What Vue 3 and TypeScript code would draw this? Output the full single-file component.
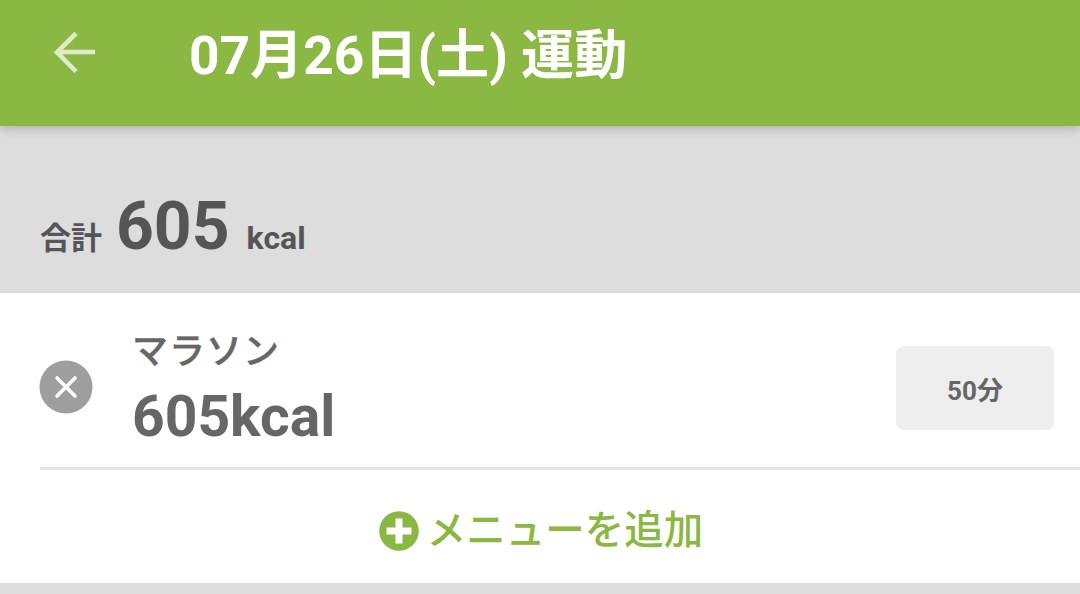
<script setup lang="ts">
const title = '07月26日(土) 運動'
const total = 605
const items = [{ name: 'マラソン', kcal: '605kcal', time: '50分' }]
</script>

<template>
  <div class="page">
    <header class="bar">
      <svg class="back" viewBox="0 0 44 48" width="44" height="48" aria-hidden="true">
        <path d="M43 24H7M24 5.500L5 24.200L24 43.500" fill="none" stroke="#dfeccb" stroke-width="4.600" />
      </svg>
      <h1 class="title">{{ title }}</h1>
    </header>
    <section class="summary">
      <span class="sum-label">合計</span>
      <span class="sum-value">{{ total }}</span>
      <span class="sum-unit">kcal</span>
    </section>
    <section class="list">
      <div v-for="item in items" :key="item.name" class="row">
        <svg class="remove" viewBox="0 0 54 54" width="54" height="54" aria-hidden="true">
          <circle cx="27" cy="27" r="26.500" fill="#9e9e9e" />
          <path d="M18 18L36 36M36 18L18 36" stroke="#fff" stroke-width="3.600" stroke-linecap="round" />
        </svg>
        <div class="info">
          <div class="name">{{ item.name }}</div>
          <div class="kcal">{{ item.kcal }}</div>
        </div>
        <div class="time">{{ item.time }}</div>
      </div>
      <div class="add">
        <svg class="plus" viewBox="0 0 40 40" width="40" height="40" aria-hidden="true">
          <circle cx="20" cy="20" r="19.800" fill="#8ab842" />
          <path d="M20 7.500V32.500M7.500 20H32.500" stroke="#fff" stroke-width="7" />
        </svg>
        <span class="add-label">メニューを追加</span>
      </div>
    </section>
    <div class="foot"></div>
  </div>
</template>

<style scoped>
.page {
  width: 1080px;
  height: 594px;
  overflow: hidden;
  display: flex;
  flex-direction: column;
  background: #dddddd;
  font-family: Roboto, "Noto Sans CJK JP", sans-serif;
}
.bar {
  height: 126px;
  flex: none;
  display: flex;
  align-items: center;
  background: #8ab842;
  box-shadow: 0 3px 10px rgba(0, 0, 0, 0.2);
  position: relative;
  padding: 0 0 12px 52px;
  box-sizing: border-box;
}
.back { flex: none; margin-top: -10px; }
.title {
  margin: 0 0 0 93px;
  font-size: 53.200px;
  font-weight: 700;
  color: #fff;
  line-height: 1;
  white-space: nowrap;
}
.summary {
  height: 167px;
  flex: none;
  box-sizing: border-box;
  display: flex;
  align-items: baseline;
  padding: 68px 0 0 40px;
  color: #555;
  font-weight: 700;
}
.sum-label { font-size: 31px; }
.sum-value { font-size: 66px; margin-left: 14px; line-height: 1; }
.sum-unit { font-size: 32px; margin-left: 17px; }
.list { background: #fff; flex: none; }
.row {
  height: 177px;
  box-sizing: border-box;
  margin-left: 40px;
  padding-right: 26px;
  border-bottom: 3px solid #e4e4e4;
  display: flex;
  align-items: center;
}
.remove { flex: none; margin: 14px 0 0 -1px; }
.info { margin-left: 39px; flex: 1; color: #666; align-self: flex-start; padding-top: 32px; }
.name { font-size: 36px; font-weight: 500; line-height: 46px; letter-spacing: 1px; font-family: "Noto Sans CJK JP", sans-serif; -webkit-text-stroke: 0.4px #666; }
.kcal { font-size: 57px; font-weight: 700; line-height: 80px; margin-top: 6px; }
.time {
  width: 158px;
  height: 84px;
  margin-top: 16px;
  border-radius: 8px;
  background: #eeeeee;
  color: #666;
  font-size: 26px;
  font-weight: 700;
  display: flex;
  align-items: center;
  justify-content: center;
}
.add {
  height: 113px;
  display: flex;
  align-items: center;
  justify-content: center;
  gap: 8px;
  padding-left: 2px;
}
.plus { flex: none; margin-top: 8px; }
.add-label { font-size: 39.500px; font-weight: 500; color: #8ab842; font-family: "Noto Sans CJK JP", sans-serif; }
.foot { flex: 1; }
</style>
